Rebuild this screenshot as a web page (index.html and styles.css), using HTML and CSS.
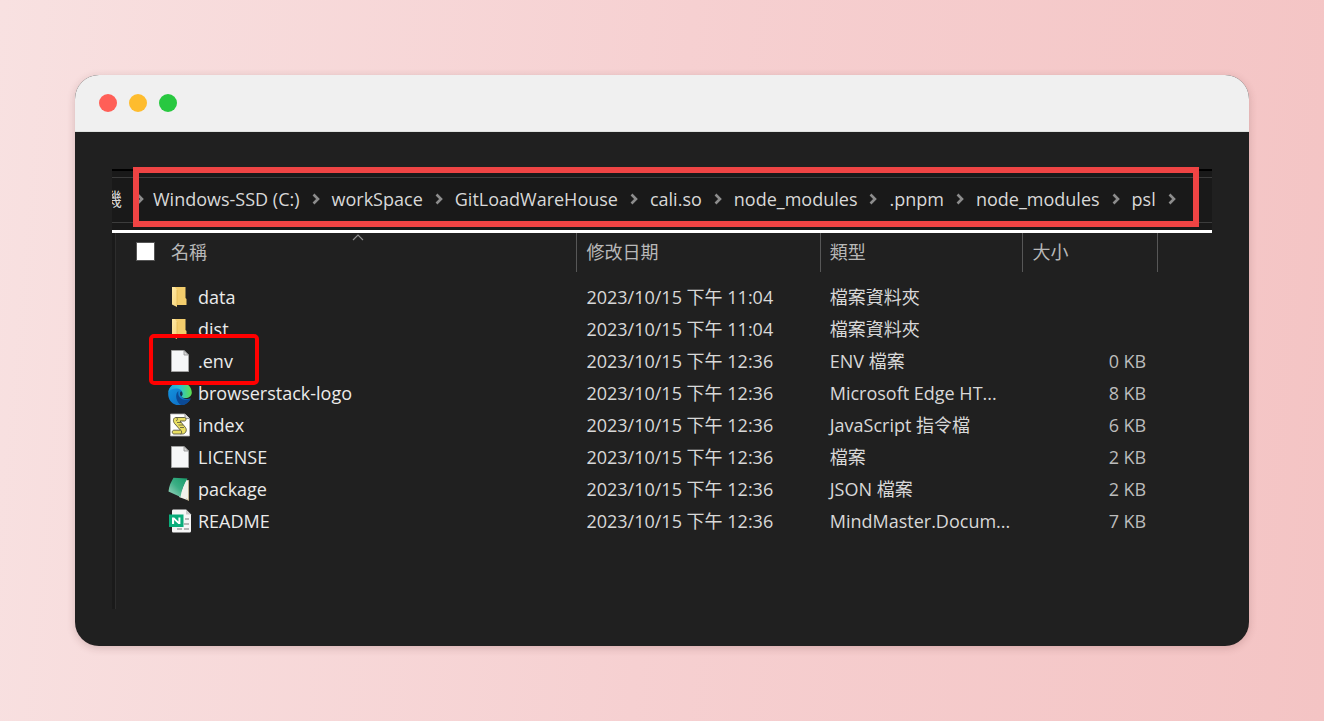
FILE: index.html
```html
<!DOCTYPE html>
<html lang="zh-Hant">
<head>
<meta charset="utf-8">
<meta name="viewport" content="width=device-width, initial-scale=1">
<title>psl</title>
<link rel="stylesheet" href="styles.css">
</head>
<body>
<svg class="defs" aria-hidden="true">
  <defs>
    <linearGradient id="folder-front" x1="0" y1="0" x2="1" y2="1"><stop offset="0" stop-color="#ffe9a6"/><stop offset="1" stop-color="#f8d67a"/></linearGradient>
    <linearGradient id="edge-top" x1="0" y1="0" x2="1" y2="0"><stop offset="0" stop-color="#1e9fe0"/><stop offset=".5" stop-color="#2dc3cf"/><stop offset="1" stop-color="#5fe04a"/></linearGradient>
    <linearGradient id="edge-body" x1="0" y1="0" x2="1" y2="1"><stop offset="0" stop-color="#1596e0"/><stop offset="1" stop-color="#0b66c0"/></linearGradient>
    <linearGradient id="note-cover" x1="0" y1="1" x2="1" y2="0"><stop offset="0" stop-color="#a5d9c5"/><stop offset=".5" stop-color="#3cae85"/><stop offset="1" stop-color="#179a68"/></linearGradient>
    <symbol id="chevron" viewBox="0 0 8 12"><path d="M1.500 1.500 6 6 1.500 10.500" fill="none" stroke="#8c8c8c" stroke-width="2.600"/></symbol>
    <symbol id="folder" viewBox="0 0 24 24"><path d="M7 2H17.500V13L18.500 14V20H7Z" fill="#f3cd6c"/><path d="M4 2H7L9 5V22L4 19.500Z" fill="url(#folder-front)"/><path d="M9 5V20" stroke="#dfb24d" stroke-width=".6"/></symbol>
    <symbol id="file" viewBox="0 0 24 24"><path d="M3.500 1.500H16L20.500 6V22.500H3.500Z" fill="#f6f7f8" stroke="#a2a2a2"/><path d="M16 1.500V6H20.500Z" fill="#dadada" stroke="#8e8e8e" stroke-width=".8"/></symbol>
    <symbol id="edge" viewBox="0 0 24 24">
      <path d="M.2 13C.2 6.500 4 3.500 9 4c6 .6 7.500 4 7 8-1.500 1-2 2-2 3.200 0 2.300 4 3.400 8.700 2.300C20.500 21.600 16.500 24.500 12 24.500 5 24.500.2 19.500.2 13Z" fill="url(#edge-body)"/>
      <path d="M.3 11.500C1.500 5 6 1.200 12 1.200c7 0 11.800 4.800 11.800 10.300 0 3.500-2.800 5.600-6.300 5.600-2.500 0-4-.7-4-1.500 0-.7 1-1.100 1-3.100C14.500 9.300 11.500 7.500 8 7.500 4.500 7.500 1.500 9 .3 11.500Z" fill="url(#edge-top)"/>
      <path d="M10.500 10C7 12.500 7.500 19 11.500 23c1 .9 2 1.300 3 1.200 3.300-.7 6-2.700 7.800-5.700.3-.6-.1-.8-.7-.6C14.500 20.700 9 16.500 10.500 10Z" fill="#0b4a96"/>
      <path d="M13.500 15.600c-2-1.800-2-4.200-.4-5.400.9.600 1.400 1.400 1.400 2.500 0 1.900-1 2.200-1 2.900Z" fill="#173450"/>
    </symbol>
    <symbol id="script" viewBox="0 0 24 24">
      <path d="M2.500 1H17l4.500 4.500V23h-19Z" fill="#fff" stroke="#b5b5b5" stroke-width=".8"/><path d="M17 1v4.500h4.500" fill="#ddd" stroke="#777" stroke-width=".7"/>
      <path d="M8 4.500h8.500c2 0 2 3.500 0 3.500h-4.500l5.500 6.500c2 3-.2 6.500-3 6.500H6c-2.300 0-2.300-3.800 0-3.800h6.500L6.500 10.500C4.500 7.500 5.500 4.500 8 4.500Z" fill="#e9df62" stroke="#55533a" stroke-width=".9"/>
      <path d="M8 4.500c1.700 0 2 3.200.2 3.200M9 9.500h4M10.500 12h4.500M12 14.500h4M12.500 17.200c1.500 0 1.500 3.800 0 3.800" fill="none" stroke="#55533a" stroke-width=".8"/>
    </symbol>
    <symbol id="notebook" viewBox="0 0 24 24"><path d="M18 2 20.500 4V23.500L11 20Z" fill="#f0f0ea"/><path d="M20.500 3v20.500L18 21.500" fill="none" stroke="#c9b88e" stroke-width=".8"/><path d="M5.500.8 19.500 1.500C16 7 13.500 13 12.500 20L.5 14.500C1 9 3 5 5.500.8Z" fill="url(#note-cover)"/></symbol>
    <symbol id="mindmaster" viewBox="0 0 24 24">
      <path d="M5.500.5H18l5 5V22c0 .8-.5 1.500-1.500 1.500h-16C4.500 23.500 4 23 4 22V2C4 1 4.600.5 5.500.5Z" fill="#f6f6f6"/><path d="M18 .5v5h5Z" fill="#c9c9c9"/>
      <path d="M17 9h4v2h-4zM16 14h5v2h-5zM9 19h5v2H9zM16 19h5v2h-5z" fill="#b7b7b7"/>
      <path d="M1 5.500h14.500v12.500H1Z" fill="#0bad7b"/><path d="M4 15V8.500h2.200l4.200 4V8.500h2V15h-2l-4.300-4v4Z" fill="#fff"/>
    </symbol>
  </defs>
</svg>

<main class="window">
  <header class="titlebar">
    <span class="dot dot-close"></span>
    <span class="dot dot-minimize"></span>
    <span class="dot dot-zoom"></span>
  </header>
  <div class="content">
    <section class="explorer">
      <nav class="address">
        <div class="clipped"><span>機</span></div>
        <ol class="crumbs">
          <li><svg class="chevron chevron-first"><use href="#chevron"/></svg></li>
          <li>Windows-SSD (C:)<svg class="chevron"><use href="#chevron"/></svg></li>
          <li>workSpace<svg class="chevron"><use href="#chevron"/></svg></li>
          <li>GitLoadWareHouse<svg class="chevron"><use href="#chevron"/></svg></li>
          <li>cali.so<svg class="chevron"><use href="#chevron"/></svg></li>
          <li>node_modules<svg class="chevron"><use href="#chevron"/></svg></li>
          <li>.pnpm<svg class="chevron"><use href="#chevron"/></svg></li>
          <li>node_modules<svg class="chevron"><use href="#chevron"/></svg></li>
          <li>psl<svg class="chevron"><use href="#chevron"/></svg></li>
        </ol>
        <span class="path-mark"></span>
      </nav>
      <div class="listing">
        <table class="files">
          <colgroup><col class="col-name"><col class="col-date"><col class="col-type"><col class="col-size"><col></colgroup>
          <thead>
            <tr>
              <th><div class="name-head"><input type="checkbox" class="select-all" id="select-all"><label for="select-all">名稱</label><svg class="sort" viewBox="0 0 12 7"><path d="M1 6 6 1 11 6" fill="none" stroke="#8c8c8c" stroke-width="1.2"/></svg></div></th>
              <th>修改日期</th><th>類型</th><th>大小</th><td></td>
            </tr>
          </thead>
          <tbody>
            <tr><td><div class="name"><svg class="icon"><use href="#folder"/></svg>data</div></td><td>2023/10/15 下午 11:04</td><td>檔案資料夾</td><td></td><td></td></tr>
            <tr><td><div class="name"><svg class="icon"><use href="#folder"/></svg>dist</div></td><td>2023/10/15 下午 11:04</td><td>檔案資料夾</td><td></td><td></td></tr>
            <tr><td><div class="name marked"><svg class="icon"><use href="#file"/></svg>.env<span class="file-mark"></span></div></td><td>2023/10/15 下午 12:36</td><td>ENV 檔案</td><td>0 KB</td><td></td></tr>
            <tr><td><div class="name"><svg class="icon"><use href="#edge"/></svg>browserstack-logo</div></td><td>2023/10/15 下午 12:36</td><td>Microsoft Edge HT...</td><td>8 KB</td><td></td></tr>
            <tr><td><div class="name"><svg class="icon"><use href="#script"/></svg>index</div></td><td>2023/10/15 下午 12:36</td><td>JavaScript 指令檔</td><td>6 KB</td><td></td></tr>
            <tr><td><div class="name"><svg class="icon"><use href="#file"/></svg>LICENSE</div></td><td>2023/10/15 下午 12:36</td><td>檔案</td><td>2 KB</td><td></td></tr>
            <tr><td><div class="name"><svg class="icon"><use href="#notebook"/></svg>package</div></td><td>2023/10/15 下午 12:36</td><td>JSON 檔案</td><td>2 KB</td><td></td></tr>
            <tr><td><div class="name"><svg class="icon"><use href="#mindmaster"/></svg>README</div></td><td>2023/10/15 下午 12:36</td><td>MindMaster.Docum...</td><td>7 KB</td><td></td></tr>
          </tbody>
        </table>
      </div>
    </section>
  </div>
</main>
</body>
</html>
```

FILE: styles.css
```css
* {
  box-sizing: border-box;
}

body {
  margin: 0;
  min-height: 100vh;
  padding: 75px;
  background: linear-gradient(95deg, #f8e1e1, #f6d0d1 50%, #f4c4c4);
  color: #d8d8d8;
  font: 18px/32px "Open Sans", "Noto Sans CJK TC", sans-serif;
}

.defs {
  position: absolute;
  width: 0;
  height: 0;
}

.window {
  overflow: hidden;
  border-radius: 24px;
  background: #202020;
  box-shadow: 0 2px 8px rgba(80, 30, 30, 0.2);
}

.titlebar {
  display: flex;
  align-items: center;
  gap: 12px;
  height: 57px;
  padding: 0 24px;
  background: #f0f0f0;
  border-bottom: 1px solid #dfe2df;
}

.dot {
  width: 18px;
  height: 18px;
  border-radius: 50%;
}

.dot-close {
  background: #ff5f57;
}

.dot-minimize {
  background: #febc2e;
}

.dot-zoom {
  background: #28c840;
}

.content {
  padding: 37px;
}

.address {
  position: relative;
  display: flex;
  align-items: center;
  height: 64px;
  padding-bottom: 4px;
  border-top: 2px solid #000;
  border-bottom: 3px solid #fff;
  background: linear-gradient(#3c3c3c, #3c3c3c) 0 6px / 100% 1px no-repeat,
    linear-gradient(#3c3c3c, #3c3c3c) 0 51px / 100% 1px no-repeat, #191919;
}

.clipped {
  display: flex;
  justify-content: flex-end;
  width: 10px;
  overflow: hidden;
}

.crumbs {
  display: flex;
  margin: 0;
  padding: 0 0 0 14px;
  list-style: none;
  white-space: nowrap;
}

.crumbs li {
  display: flex;
  align-items: center;
}

.chevron {
  width: 8px;
  height: 12px;
  margin: 0 12px;
}

.chevron-first {
  margin: 0 9px 0 0;
}

.path-mark {
  position: absolute;
  inset: -4px 13px 3px 21px;
  border: 6px solid #ef4444;
}

.listing {
  min-height: 376px;
  padding-left: 1px;
  border-left: 3px solid #1a1a1a;
  background: linear-gradient(#2d2d2d, #2d2d2d) 0 0 / 1px 100% no-repeat;
}

.files {
  width: 100%;
  table-layout: fixed;
  border-collapse: separate;
  border-spacing: 0;
}

.col-name {
  width: 42.1%;
}

.col-date {
  width: 22.2%;
}

.col-type {
  width: 18.5%;
}

.col-size {
  width: 12.3%;
}

.files th,
.files td {
  padding: 0 0 0 9px;
  text-align: left;
  font-weight: 400;
  white-space: nowrap;
}

.files th {
  height: 39px;
  padding-bottom: 2px;
  border-right: 1px solid #575757;
  color: #b8b8b8;
}

.files th:first-child,
.files td:first-child {
  padding-left: 20px;
}

.files tbody::before {
  content: "";
  display: block;
  height: 9px;
}

.files tbody td {
  height: 32px;
}

.files tbody td:nth-child(4) {
  padding-right: 12px;
  text-align: right;
  color: #bcbcbc;
}

.name-head,
.name {
  position: relative;
  display: flex;
  align-items: center;
}

.name-head {
  gap: 16px;
}

.select-all {
  appearance: none;
  width: 19px;
  height: 19px;
  margin: 0;
  border: 1px solid #555;
  background: #fff;
}

.sort {
  position: absolute;
  top: -2px;
  left: 49%;
  width: 12px;
  height: 7px;
}

.name {
  gap: 6px;
  padding-left: 32px;
  color: #ebebeb;
}

.marked {
  z-index: 1;
}

.icon {
  width: 24px;
  height: 24px;
}

.file-mark {
  position: absolute;
  top: -11px;
  left: 13px;
  width: 110px;
  height: 51px;
  border: 4px solid #f00;
  border-radius: 5px;
}
```
